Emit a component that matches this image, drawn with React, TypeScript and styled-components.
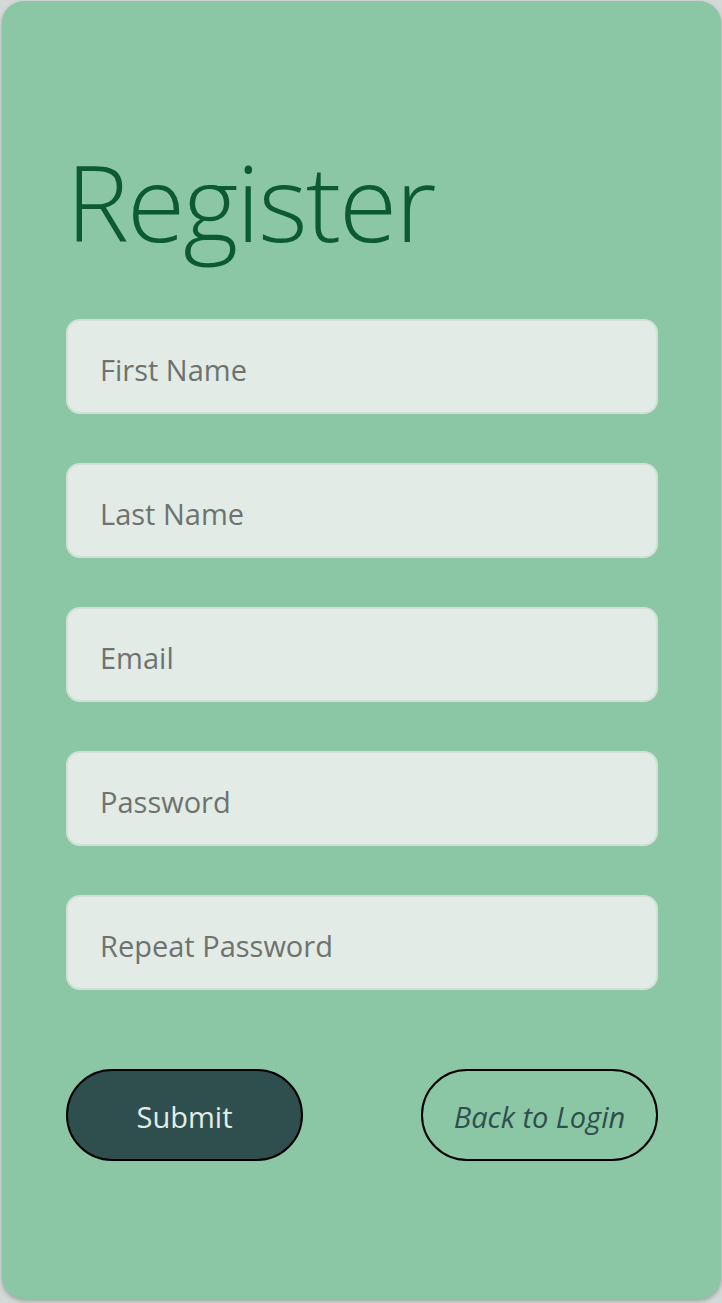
import React from "react";
import styled, { createGlobalStyle } from "styled-components";

const Global = createGlobalStyle`
  html, body { margin: 0; padding: 0; }
  body {
    background: #d3d9d6;
    font-family: "Open Sans", "Noto Sans", sans-serif;
  }
`;

const Page = styled.div`
  padding: 1px 1px 4px 2px;
`;

const Card = styled.form`
  box-sizing: border-box;
  height: 1298px;
  background: #8bc7a5;
  border-radius: 22px;
  box-shadow: 0 2px 4px rgba(0, 0, 0, 0.25);
  padding: 130px 64px 0 64px;
  display: flex;
  flex-direction: column;
`;

const Title = styled.h1`
  margin: 0 0 48px 0;
  font-weight: 300;
  font-size: 106px;
  line-height: 140px;
  color: #0b5a32;
  letter-spacing: -2px;
`;

const Fields = styled.div`
  display: flex;
  flex-direction: column;
  gap: 49px;
`;

const Input = styled.input`
  box-sizing: border-box;
  height: 95px;
  width: 592px;
  border: 2px solid #d3e0d8;
  border-radius: 14px;
  background: #e2ebe6;
  padding: 6px 32px 0 32px;
  font-family: "Open Sans", "Noto Sans", sans-serif;
  font-size: 29px;
  color: #333;
  outline: none;
  &::placeholder {
    color: #6e736f;
  }
`;

const Actions = styled.div`
  display: flex;
  justify-content: space-between;
  margin-top: 79px;
  width: 592px;
`;

const Button = styled.button<{ $variant?: "primary" | "ghost" }>`
  box-sizing: border-box;
  width: 237px;
  height: 92px;
  padding-top: 4px;
  border: 2px solid #000;
  border-radius: 46px;
  background: ${(p) => (p.$variant === "primary" ? "#2f4f4f" : "transparent")};
  color: ${(p) => (p.$variant === "primary" ? "#e3ece8" : "#2f4f4f")};
  font-style: ${(p) => (p.$variant === "primary" ? "normal" : "italic")};
  font-family: "Open Sans", "Noto Sans", sans-serif;
  font-size: 29px;
  cursor: pointer;
`;

export default function App() {
  return (
    <Page>
      <Global />
      <Card onSubmit={(e) => e.preventDefault()}>
        <Title>Register</Title>
        <Fields>
          <Input placeholder="First Name" />
          <Input placeholder="Last Name" />
          <Input placeholder="Email" type="email" />
          <Input placeholder="Password" type="password" />
          <Input placeholder="Repeat Password" type="password" />
        </Fields>
        <Actions>
          <Button $variant="primary" type="submit">Submit</Button>
          <Button $variant="ghost" type="button">Back to Login</Button>
        </Actions>
      </Card>
    </Page>
  );
}
